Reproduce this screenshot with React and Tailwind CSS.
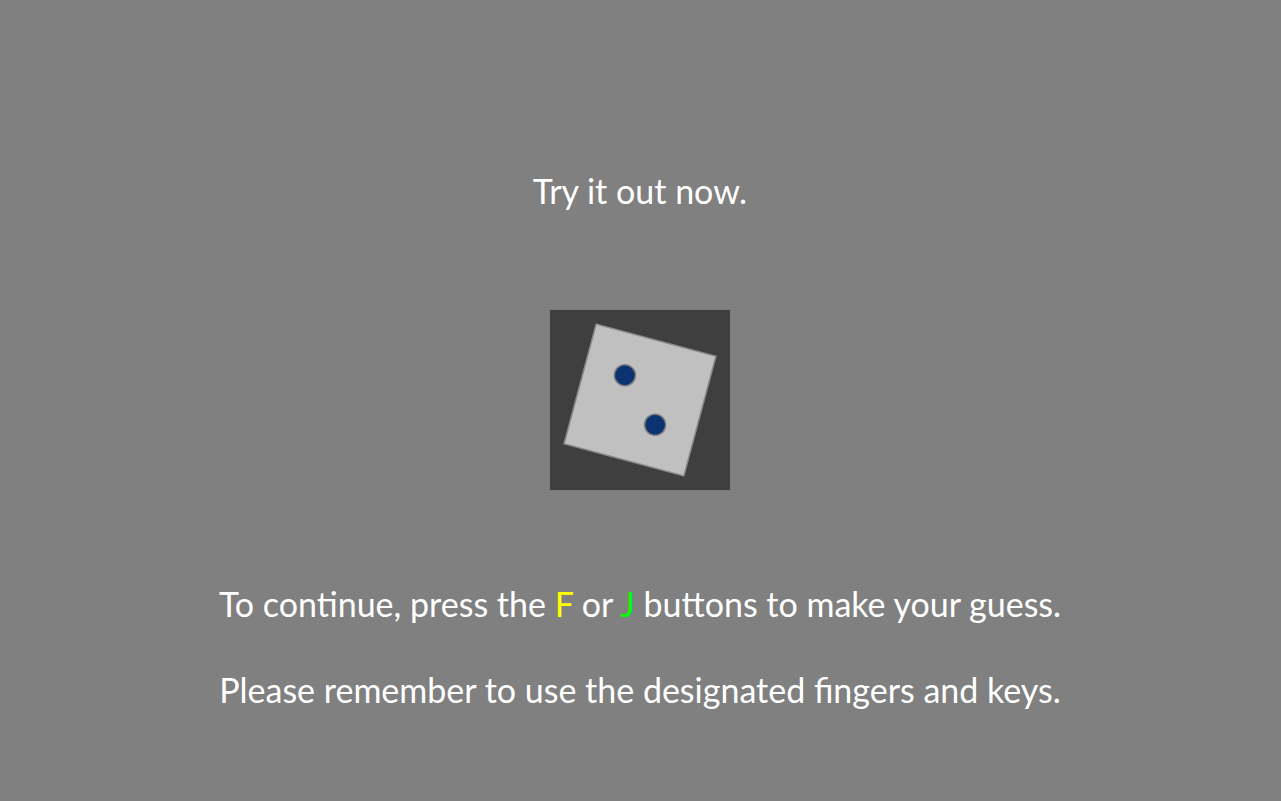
export default function App() {
  const font = { fontFamily: 'Lato, "Open Sans", sans-serif' };
  return (
    <div className="w-[1281px] h-[801px] bg-[#808080]">
      <div className="w-[1280px] h-[801px] flex flex-col items-center text-white text-[34px] leading-none" style={font}>
        <div className="mt-[174px] h-[36px]">Try it out now.</div>
        <div className="mt-[100px] w-[180px] h-[180px] bg-[#3f3f3f]">
          <svg width="180" height="180" viewBox="0 0 180 180">
            <g transform="translate(90 90) rotate(15)">
              <rect x="-62" y="-62" width="124" height="124" fill="#c0c0c0" stroke="#8a8a8a" strokeWidth="1.5" />
              <circle cx="-21" cy="-20" r="10.5" fill="#0b3372" stroke="#7a7a7a" strokeWidth="1.5" />
              <circle cx="21" cy="20" r="10.5" fill="#0b3372" stroke="#7a7a7a" strokeWidth="1.5" />
            </g>
          </svg>
        </div>
        <div className="mt-[97px] h-[36px]">
          To continue, press the <span className="text-[#ffff00]">F</span> or <span className="text-[#00ff00]">J</span> buttons to make your guess.
        </div>
        <div className="mt-[50px] h-[36px]">Please remember to use the designated fingers and keys.</div>
      </div>
    </div>
  );
}
